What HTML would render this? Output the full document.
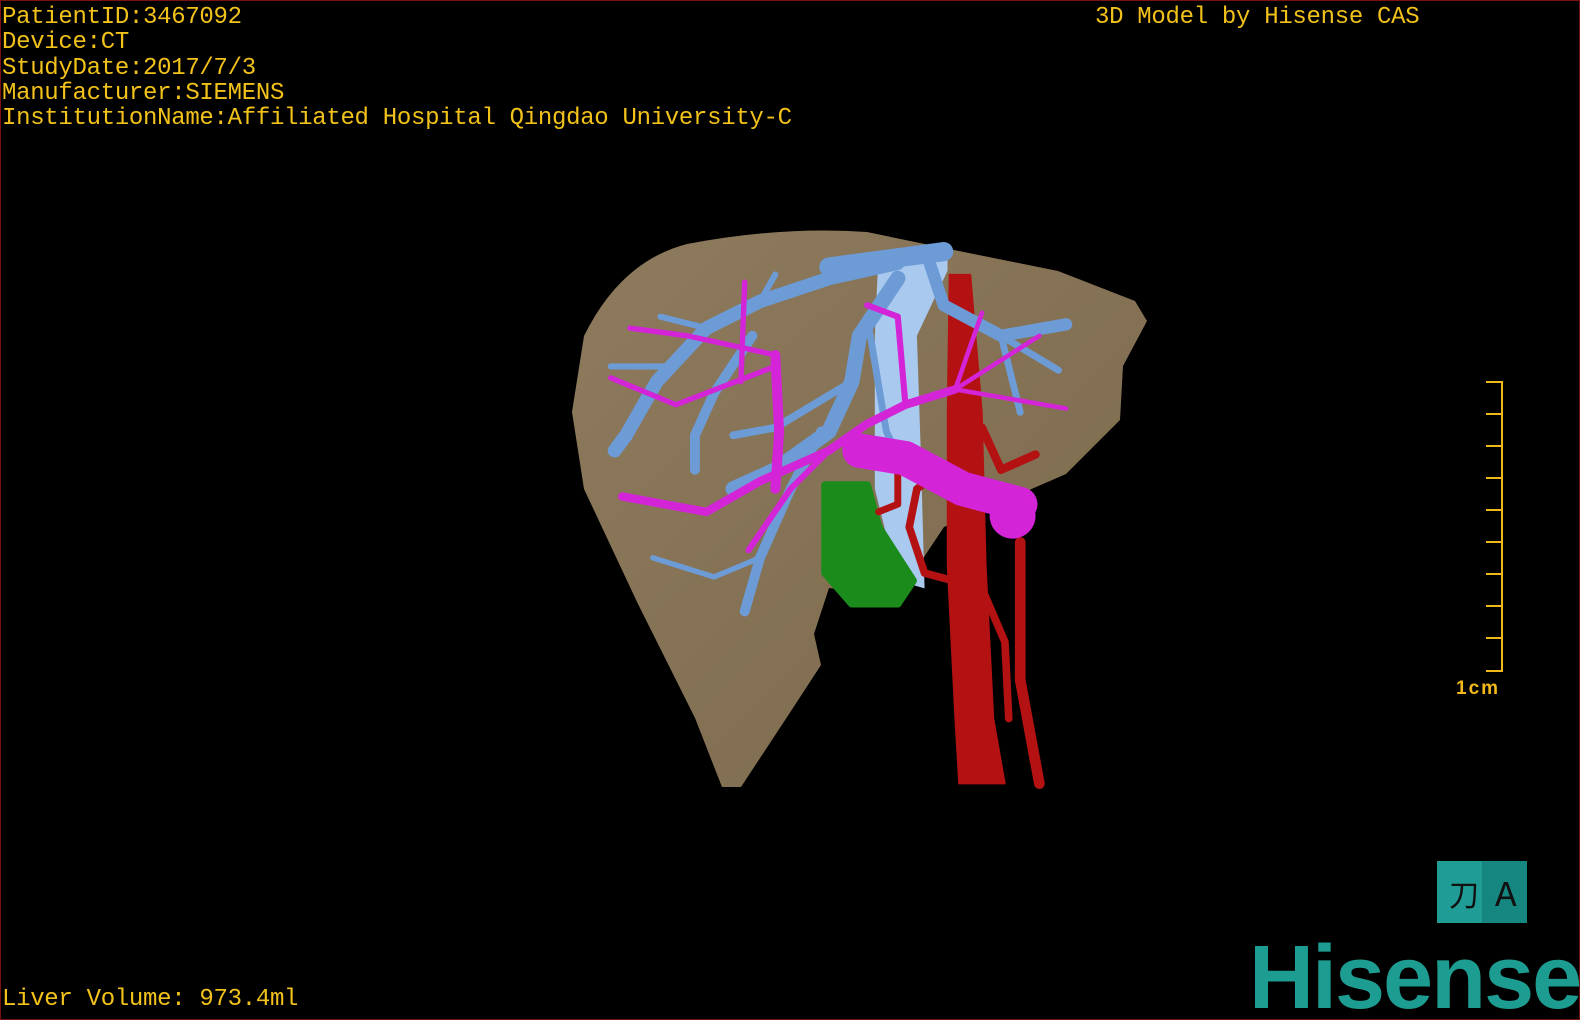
<!DOCTYPE html>
<html><head><style>
html,body{margin:0;padding:0;background:#000;}
#v{position:relative;width:1580px;height:1020px;overflow:hidden;background:#000;box-sizing:border-box;border:1px solid #7a1010;}
.t{position:absolute;color:#f2c21a;font-family:"Liberation Mono",monospace;font-size:24px;line-height:25.3px;white-space:pre;letter-spacing:-0.3px;}
</style></head><body><div id="v">
<div class="t" style="left:1px;top:4px">PatientID:3467092
Device:CT
StudyDate:2017/7/3
Manufacturer:SIEMENS
InstitutionName:Affiliated Hospital Qingdao University-C</div>
<div class="t" style="left:1094px;top:4px">3D Model by Hisense CAS</div>
<div class="t" style="left:1px;top:986px">Liver Volume: 973.4ml</div>
<svg width="1580" height="1020" style="position:absolute;left:0;top:0">
<defs><linearGradient id="lg" x1="0" y1="0" x2="1" y2="1"><stop offset="0" stop-color="#8e7a5c"/><stop offset="1" stop-color="#7c6a4e"/></linearGradient></defs>
<path d="M583,335 Q620,260 686,243 Q780,225 866,231 L943,247 L1057,270 L1134,300 L1146,320 L1122,365 L1119,419 L1065,473 L943,526 L897,595 L828,587 L813,633 L820,664 L790,710 L740,786 L721,786 L694,717 L637,603 L583,488 L571,411 Z" fill="url(#lg)"/>
<g transform="translate(560,220) scale(0.3827)" fill="none" stroke-linecap="round" stroke-linejoin="round">
<path d="M830,80 L1010,70 L1010,130 L930,300 L940,600 L950,960 L880,940 L820,700 L820,300 Z" fill="#a9c9ef"/>
<path d="M690,690 L800,690 L830,800 L920,940 L880,1000 L760,1000 L690,920 Z" fill="#1b8c1b" stroke="#1b8c1b" stroke-width="20"/>
<g stroke="#b41212">
<path d="M1015,140 L1070,140 L1100,500 L1110,900 L1130,1300 L1160,1470 L1040,1470 L1030,1300 L1010,900 L1010,500 Z" fill="#b41212" stroke-width="4"/>
<path d="M1000,650 L930,700 L910,800 L950,920 L1100,960 L1160,1100 L1170,1300" stroke-width="20"/>
<path d="M1200,840 L1200,1200 L1250,1470" stroke-width="28"/>
<path d="M1100,540 L1150,650 L1240,610" stroke-width="22"/>
<path d="M880,640 L880,740 L830,760" stroke-width="18"/>
</g>
<g stroke="#6c9bd6">
<path d="M880,110 L700,150 L520,210 L380,280 L250,420 L170,560 L140,600" stroke-width="36"/>
<path d="M520,210 L560,140 M380,280 L260,250 M300,380 L130,380 M250,420 L200,500" stroke-width="16"/>
<path d="M880,150 L780,300 L760,420 L700,550 L560,650 L450,700" stroke-width="40"/>
<path d="M760,420 L560,540 L450,560" stroke-width="20"/>
<path d="M500,300 L400,450 L350,560 L350,650" stroke-width="26"/>
<path d="M680,550 L600,700 L520,880 L480,1020" stroke-width="26"/>
<path d="M520,880 L400,930 L240,880" stroke-width="14"/>
<path d="M960,100 L1000,220 L1150,300 L1320,270" stroke-width="32"/>
<path d="M1150,300 L1300,390 M1150,300 L1200,500 M800,250 L850,550 L900,650" stroke-width="18"/>
<path d="M700,120 L1000,80" stroke-width="50"/>
</g>
<g stroke="#d424d8">
<path d="M780,600 L900,620 L1050,700 L1200,740" stroke-width="90"/>
<ellipse cx="1180" cy="770" rx="60" ry="60" fill="#d424d8" stroke="none"/>
<path d="M1030,440 L900,480 L800,530 L700,600 L520,680 L380,760 L160,720" stroke-width="22"/>
<path d="M560,350 L570,550 L560,700" stroke-width="26"/>
<path d="M700,600 L600,700 L490,860 M900,480 L880,250 L800,220" stroke-width="16"/>
<path d="M1030,440 L1100,240 M1030,440 L1250,300 M1030,440 L1320,490" stroke-width="12"/>
<path d="M560,380 L300,480 L130,410 M470,420 L480,160 M560,350 L330,300 L180,280" stroke-width="14"/>
</g>
</g>
<g stroke="#f2b818" stroke-width="2" fill="none">
<path d="M1485,381 H1501 V670 H1485"/>
<path d="M1485,413 H1501 M1485,445 H1501 M1485,477 H1501 M1485,509 H1501 M1485,541 H1501 M1485,573 H1501 M1485,605 H1501 M1485,637 H1501"/>
</g>
<text x="1455" y="693" fill="#f2b818" font-family="Liberation Sans" font-weight="bold" font-size="19" letter-spacing="2">1cm</text>
<rect x="1436" y="860" width="45" height="62" fill="#1e9c95"/>
<rect x="1481" y="860" width="45" height="62" fill="#168680"/>
<text x="1448" y="905" font-family="Liberation Sans" font-size="30" fill="#111">刀</text>
<text x="1494" y="905" font-family="Liberation Mono" font-size="36" fill="#111">A</text>
<text x="1248" y="1007" font-family="Liberation Sans" font-weight="bold" font-size="90" fill="#1d9d92" letter-spacing="-2">Hisense</text>
</svg>
</div></body></html>
